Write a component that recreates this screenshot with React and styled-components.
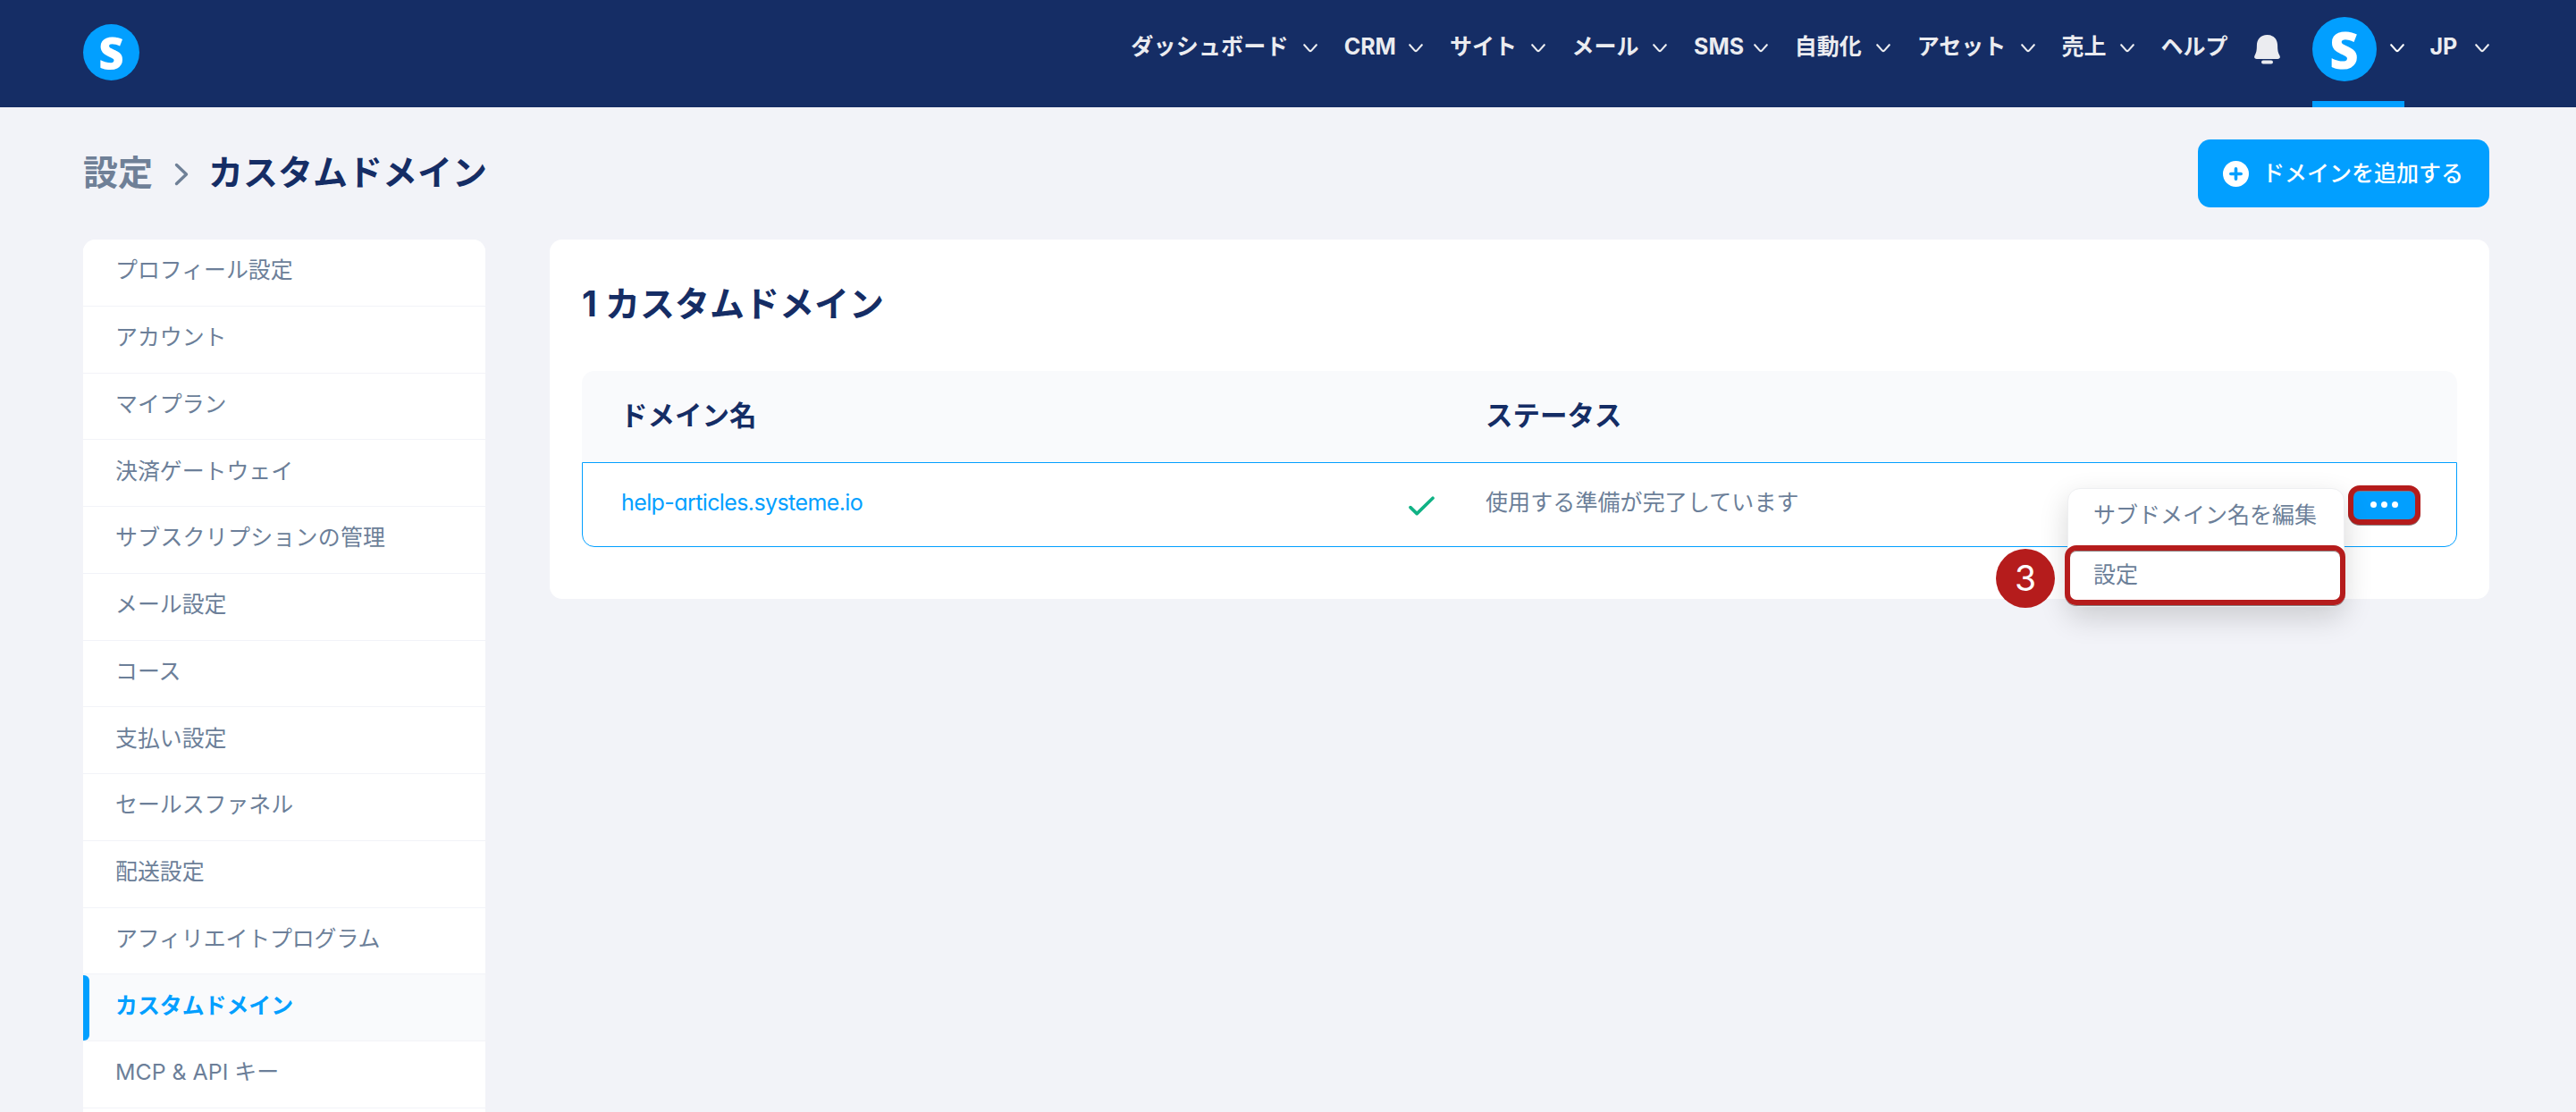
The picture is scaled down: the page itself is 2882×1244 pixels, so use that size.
import React from "react";
import styled, { createGlobalStyle } from "styled-components";

const GlobalStyle = createGlobalStyle`
  *, *::before, *::after {
    box-sizing: border-box;
  }

  body {
    margin: 0;
    background-color: #f2f3f8;
    color: #6c7f99;
    font-family: Inter, "Noto Sans CJK JP", sans-serif;
    font-size: 25px;
    line-height: 1;
    overflow: hidden;
  }
`;

const Page = styled.div`
  height: 1244px;
  overflow: hidden;
`;

const Header = styled.header`
  height: 120px;
  padding: 0 97px 0 93px;
  display: flex;
  justify-content: space-between;
  background-color: #152d65;
`;

const RoundLogo = styled.div`
  width: ${(props) => props.$size}px;
  height: ${(props) => props.$size}px;
  margin-top: ${(props) => props.$top}px;
  display: flex;
  flex: none;
  align-items: center;
  justify-content: center;
  border-radius: 50%;
  background-color: #029fff;
  color: #fff;
  font-family: "Open Sans", sans-serif;
  font-size: ${(props) => props.$size * 0.78}px;
  font-weight: 800;
`;

const LogoLetter = styled.span`
  line-height: 1;
`;

const Nav = styled.nav`
  display: flex;
  color: #ebecf0;
  font-weight: 700;
`;

const NavItem = styled.div`
  height: 104px;
  margin-right: ${(props) => props.$after ?? 29.6}px;
  display: flex;
  align-items: center;
  gap: 16.5px;
  white-space: nowrap;
`;

const NavLabel = styled.span`
  width: ${(props) => (props.$width ? `${props.$width}px` : "auto")};
  letter-spacing: ${(props) => props.$spacing ?? 0}px;
`;

const ChevronSvg = styled.svg`
  width: 16px;
  height: 10px;
  margin-top: 4px;
  flex: none;
  fill: none;
  stroke: currentColor;
  stroke-width: 2.1;
  stroke-linecap: round;
  stroke-linejoin: round;
`;

const BellSvg = styled.svg`
  width: 29px;
  height: 33px;
  margin: 39px 36px 0 0;
  fill: currentColor;
`;

const Account = styled.div`
  width: 103px;
  height: 120px;
  margin-right: 29px;
  display: flex;
  justify-content: space-between;
  border-bottom: 7px solid #029fff;
  color: #fff;
`;

const AccountChevron = styled.div`
  height: 104px;
  display: flex;
  align-items: center;
`;

const TitleBar = styled.div`
  height: 148px;
  padding: 0 97px 0 93px;
  display: flex;
  align-items: center;
  justify-content: space-between;
`;

const Breadcrumb = styled.h1`
  margin: 0 0 3px;
  display: flex;
  align-items: center;
  color: #152d65;
  font-size: 39px;
  font-weight: 700;
`;

const Parent = styled.span`
  color: #6f8097;
`;

const BreadcrumbArrow = styled.svg`
  width: 16px;
  height: 26px;
  margin: 4px 22px 0 24px;
  fill: none;
  stroke: #6f8097;
  stroke-width: 3.4;
  stroke-linecap: round;
  stroke-linejoin: round;
`;

const AddButton = styled.button`
  width: 326px;
  height: 76px;
  padding: 0 0 0 28px;
  display: flex;
  align-items: center;
  gap: 15px;
  border: none;
  border-radius: 14px;
  background-color: #029fff;
  color: #fff;
  font: inherit;
  font-weight: 500;
`;

const PlusSvg = styled.svg`
  width: 29px;
  height: 29px;
  flex: none;
`;

const Content = styled.main`
  padding: 0 97px 0 93px;
  display: flex;
  align-items: flex-start;
  gap: 72px;
`;

const Sidebar = styled.aside`
  width: 450px;
  flex: none;
  border-radius: 14px 14px 0 0;
  background-color: #fff;
  overflow: hidden;
`;

const SidebarItem = styled.div`
  height: 74.75px;
  padding: 0 0 4px ${(props) => (props.$active ? 29 : 36)}px;
  display: flex;
  align-items: center;
  border-bottom: 1px solid #f2f3f8;
  background-color: ${(props) => (props.$active ? "#f9fafc" : "#fff")};
  color: ${(props) => (props.$active ? "#029fff" : "inherit")};
  font-size: 24.9px;
  font-weight: ${(props) => (props.$active ? 700 : 400)};
  letter-spacing: ${(props) => props.$spacing ?? 0}px;
`;

const ActiveMark = styled.div`
  width: 7px;
  height: 73px;
  margin: 4px 0 0 -29px;
  flex: none;
  border-radius: 0 6px 6px 0;
  background-color: #029fff;
`;

const ActiveText = styled.span`
  margin-left: 29px;
`;

const Card = styled.section`
  width: 2170px;
  height: 402px;
  padding: 36px;
  border-radius: 14px;
  background-color: #fff;
`;

const CardTitle = styled.h2`
  height: 111px;
  margin: 0;
  color: #152d65;
  font-size: 39px;
  font-weight: 700;
  line-height: 71px;
`;

const TableHead = styled.div`
  height: 102px;
  padding: 0 40px 1px 43px;
  display: grid;
  grid-template-columns: 968px 1fr;
  align-items: center;
  border-radius: 14px 14px 0 0;
  background-color: #f9fafc;
  color: #152d65;
  font-size: 30.5px;
  font-weight: 700;
`;

const TableRow = styled.div`
  position: relative;
  height: 95px;
  padding: 0 40px 0 43px;
  display: grid;
  grid-template-columns: 967px 1fr auto;
  align-items: center;
  border: 1px solid #029fff;
  border-radius: 0 0 14px 14px;
`;

const DomainCell = styled.div`
  padding-right: 57px;
  display: flex;
  align-items: center;
  justify-content: space-between;
`;

const DomainLink = styled.a`
  margin-bottom: 5px;
  color: #029fff;
  font-size: 25px;
  font-feature-settings: "cv11";
  letter-spacing: -0.6px;
`;

const CheckSvg = styled.svg`
  width: 29px;
  height: 22px;
  margin-top: 2px;
  fill: none;
  stroke: #10b285;
  stroke-width: 3.6;
  stroke-linecap: round;
  stroke-linejoin: round;
`;

const StatusCell = styled.div`
  padding-bottom: 5px;
  letter-spacing: 0.1px;
`;

const MoreButton = styled.button`
  width: 81px;
  height: 44px;
  padding: 0;
  display: flex;
  align-items: center;
  justify-content: center;
  gap: 5px;
  border: 6px solid #b51c1c;
  border-radius: 13px;
  background-color: #029fff;
  box-shadow: 0 1px 0 #8a7f7f, inset 0 1px 0 #6f7f93;
`;

const Dot = styled.span`
  width: 7px;
  height: 7px;
  border-radius: 50%;
  background-color: #fff;
`;

const Menu = styled.div`
  position: absolute;
  top: 28px;
  right: 125px;
  width: 310px;
  height: 133px;
  border: 1px solid #eeeff1;
  border-radius: 14px;
  background-color: #fff;
  box-shadow: 0 12px 32px rgba(0, 0, 0, 0.16);
`;

const MenuItem = styled.div`
  height: 63px;
  padding: 0 0 4px 28px;
  display: flex;
  align-items: center;
`;

const MenuItemMarked = styled.div`
  width: 314px;
  height: 67px;
  margin-left: -4px;
  padding: 0 0 1px 26px;
  display: flex;
  align-items: center;
  border: 6px solid #b51c1c;
  border-radius: 13px;
  box-shadow: 0 1px 0 #8a7f7f, inset 0 1px 0 #8a7f7f;
`;

const Step = styled.div`
  position: absolute;
  top: 96px;
  right: 449px;
  width: 66px;
  height: 66px;
  padding-bottom: 2px;
  display: flex;
  align-items: center;
  justify-content: center;
  border-radius: 50%;
  background-color: #b51c1c;
  color: #fff;
  font-size: 39px;
`;

const navItems = [
  { label: "ダッシュボード", width: 176.3, spacing: 0.2 },
  { label: "CRM", width: 56.1 },
  { label: "サイト", width: 74.5 },
  { label: "メール", width: 74.5 },
  { label: "SMS", width: 50.5 },
  { label: "自動化" },
  { label: "アセット" },
  { label: "売上", width: 49 },
];

const sidebarItems = [
  { label: "プロフィール設定" },
  { label: "アカウント" },
  { label: "マイプラン" },
  { label: "決済ゲートウェイ" },
  { label: "サブスクリプションの管理", spacing: 0.3 },
  { label: "メール設定" },
  { label: "コース" },
  { label: "支払い設定" },
  { label: "セールスファネル" },
  { label: "配送設定" },
  { label: "アフィリエイトプログラム", spacing: -0.1 },
  { label: "カスタムドメイン", active: true },
  { label: "MCP & API キー" },
  { label: "" },
];

const Chevron = () => (
  <ChevronSvg viewBox="0 0 16 10">
    <path d="M1.2 1.2 L6.9 7.6 Q8 8.7 9.1 7.6 L14.8 1.2" />
  </ChevronSvg>
);

const TopBar = () => (
  <Header>
    <RoundLogo $size={63} $top={27}>
      <LogoLetter>S</LogoLetter>
    </RoundLogo>
    <Nav>
      {navItems.map(({ label, width, spacing }) => (
        <NavItem key={label}>
          <NavLabel $width={width} $spacing={spacing}>
            {label}
          </NavLabel>
          <Chevron />
        </NavItem>
      ))}
      <NavItem $after={29}>ヘルプ</NavItem>
      <BellSvg viewBox="0 0 29 33">
        <path d="M14.5 0 C7 0 2.9 5 2.9 12 C2.9 18 2.2 20 .5 23.3 C-.5 25.6 .6 27 2.8 27 H26.2 C28.4 27 29.5 25.6 28.5 23.3 C26.8 20 26.1 18 26.1 12 C26.1 5 22 0 14.5 0 Z" />
        <rect x="8" y="28.6" width="13" height="4" rx="2" />
      </BellSvg>
      <Account>
        <RoundLogo $size={72} $top={19}>
          <LogoLetter>S</LogoLetter>
        </RoundLogo>
        <AccountChevron>
          <Chevron />
        </AccountChevron>
      </Account>
      <NavItem $after={0}>
        <NavLabel $width={34}>JP</NavLabel>
        <Chevron />
      </NavItem>
    </Nav>
  </Header>
);

const SettingsMenu = () => (
  <Sidebar>
    {sidebarItems.map(({ label, active, spacing }) => (
      <SidebarItem key={label} $active={active} $spacing={spacing}>
        {active && <ActiveMark />}
        {active ? <ActiveText>{label}</ActiveText> : label}
      </SidebarItem>
    ))}
  </Sidebar>
);

const DomainRow = () => (
  <TableRow>
    <DomainCell>
      <DomainLink>help-articles.systeme.io</DomainLink>
      <CheckSvg viewBox="0 0 29 22">
        <path d="M2 12.6 L9.2 19.6 L27 2.2" />
      </CheckSvg>
    </DomainCell>
    <StatusCell>使用する準備が完了しています</StatusCell>
    <MoreButton>
      <Dot />
      <Dot />
      <Dot />
    </MoreButton>
    <Menu>
      <MenuItem>サブドメイン名を編集</MenuItem>
      <MenuItemMarked>設定</MenuItemMarked>
    </Menu>
    <Step>3</Step>
  </TableRow>
);

const App = () => (
  <Page>
    <GlobalStyle />
    <TopBar />
    <TitleBar>
      <Breadcrumb>
        <Parent>設定</Parent>
        <BreadcrumbArrow viewBox="0 0 16 26">
          <path d="M2.5 2.5 L13.5 13 L2.5 23.5" />
        </BreadcrumbArrow>
        カスタムドメイン
      </Breadcrumb>
      <AddButton>
        <PlusSvg viewBox="0 0 29 29">
          <circle cx="14.5" cy="14.5" r="14.5" fill="#fff" />
          <path
            d="M14.5 8.8 V20.2 M8.8 14.5 H20.2"
            stroke="#029fff"
            strokeWidth="3.6"
            strokeLinecap="round"
          />
        </PlusSvg>
        ドメインを追加する
      </AddButton>
    </TitleBar>
    <Content>
      <SettingsMenu />
      <Card>
        <CardTitle>1 カスタムドメイン</CardTitle>
        <TableHead>
          <span>ドメイン名</span>
          <span>ステータス</span>
        </TableHead>
        <DomainRow />
      </Card>
    </Content>
  </Page>
);

export default App;
